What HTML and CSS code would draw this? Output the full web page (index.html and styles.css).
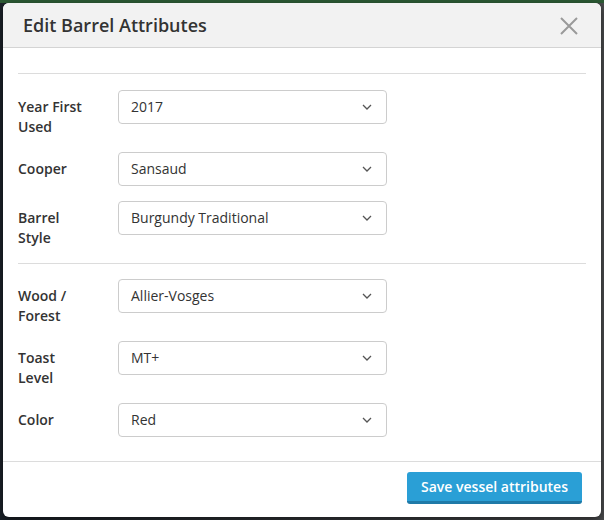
FILE: index.html
```html
<!DOCTYPE html>
<html>
<head>
<meta charset="utf-8">
<link rel="stylesheet" href="styles.css">
</head>
<body>
<div class="backdrop">
  <div class="modal">
    <div class="modal-header">
      <h4 class="modal-title">Edit Barrel Attributes</h4>
      <span class="close" aria-label="Close">
        <svg width="18" height="18" viewBox="0 0 18 18"><path d="M1 1 L17 17 M17 1 L1 17" stroke="#9a9a9a" stroke-width="2" fill="none"/></svg>
      </span>
    </div>
    <div class="modal-body">
      <hr class="sep first">
      <div class="form-group">
        <label class="lbl">Year First Used</label>
        <div class="select"><span>2017</span><svg class="chev" width="10" height="6" viewBox="0 0 10 6"><path d="M1 1 L5 5 L9 1" stroke="#555" stroke-width="1.3" fill="none"/></svg></div>
      </div>
      <div class="form-group">
        <label class="lbl">Cooper</label>
        <div class="select"><span>Sansaud</span><svg class="chev" width="10" height="6" viewBox="0 0 10 6"><path d="M1 1 L5 5 L9 1" stroke="#555" stroke-width="1.3" fill="none"/></svg></div>
      </div>
      <div class="form-group">
        <label class="lbl">Barrel Style</label>
        <div class="select"><span>Burgundy Traditional</span><svg class="chev" width="10" height="6" viewBox="0 0 10 6"><path d="M1 1 L5 5 L9 1" stroke="#555" stroke-width="1.3" fill="none"/></svg></div>
      </div>
      <hr class="sep mid">
      <div class="form-group">
        <label class="lbl">Wood / Forest</label>
        <div class="select"><span>Allier-Vosges</span><svg class="chev" width="10" height="6" viewBox="0 0 10 6"><path d="M1 1 L5 5 L9 1" stroke="#555" stroke-width="1.3" fill="none"/></svg></div>
      </div>
      <div class="form-group">
        <label class="lbl">Toast Level</label>
        <div class="select"><span>MT+</span><svg class="chev" width="10" height="6" viewBox="0 0 10 6"><path d="M1 1 L5 5 L9 1" stroke="#555" stroke-width="1.3" fill="none"/></svg></div>
      </div>
      <div class="form-group last">
        <label class="lbl">Color</label>
        <div class="select"><span>Red</span><svg class="chev" width="10" height="6" viewBox="0 0 10 6"><path d="M1 1 L5 5 L9 1" stroke="#555" stroke-width="1.3" fill="none"/></svg></div>
      </div>
    </div>
    <div class="modal-footer">
      <button class="btn">Save vessel attributes</button>
    </div>
  </div>
</div>
</body>
</html>
```
FILE: styles.css
```css
html, body {
  margin: 0;
  padding: 0;
  height: 100%;
}
body {
  background: linear-gradient(to right, #1b2128 0px, #1b2128 6px, #2d3034 40%, #4a4b4d 100%);
  font-family: "Open Sans", "Liberation Sans", sans-serif;
  color: #333;
}
.backdrop {
  border-top: 3px solid #2c5a34;
  padding: 0 3px 3px 3px;
  height: 517px;
  box-sizing: border-box;
}
.modal {
  background: #fff;
  border-radius: 6px;
  overflow: hidden;
  height: 514px;
  display: flex;
  flex-direction: column;
  box-shadow: 0 3px 9px rgba(0,0,0,0.5);
}
.modal-header {
  background: #f2f2f2;
  border-bottom: 1px solid #d4d4d4;
  height: 45px;
  box-sizing: border-box;
  display: flex;
  align-items: center;
  justify-content: space-between;
  padding: 0 23px 0 20px;
}
.modal-title {
  margin: 0;
  font-size: 18px;
  font-weight: 600;
  color: #333;
  letter-spacing: 0;
}
.close {
  display: flex;
  align-items: center;
  margin-top: 1px;
}
.modal-body {
  padding: 0 15px;
  flex: 1;
}
.sep {
  border: 0;
  border-top: 1px solid #dcdcdc;
  margin: 0;
}
.sep.first {
  margin-top: 25px;
  margin-bottom: 16px;
}
.sep.mid {
  margin-top: 0;
  margin-bottom: 15px;
}
.form-group {
  display: flex;
  align-items: flex-start;
  margin-bottom: 15px;
}
.form-group.last {
  margin-bottom: 0;
}
.lbl {
  width: 100px;
  flex: none;
  font-size: 14px;
  font-weight: 600;
  line-height: 20px;
  padding-top: 7px;
  padding-right: 30px;
  box-sizing: border-box;
}
.select {
  width: 269px;
  height: 34px;
  box-sizing: border-box;
  border: 1px solid #cccccc;
  border-radius: 4px;
  display: flex;
  align-items: center;
  justify-content: space-between;
  padding: 0 14px 0 12px;
  font-size: 14px;
  color: #333;
}
.select span {
  margin-top: -2px;
}
.chev {
  display: block;
}
.modal-footer {
  border-top: 1px solid #dcdcdc;
  height: 56px;
  box-sizing: border-box;
  display: flex;
  justify-content: flex-end;
  align-items: flex-start;
  padding: 10px 19px 0 0;
}
.btn {
  background: #2a9fd6;
  border: 0;
  border-bottom: 3px solid #1f7aa8;
  border-radius: 3px;
  color: #fff;
  font-family: "Open Sans", "Liberation Sans", sans-serif;
  font-size: 14px;
  font-weight: 600;
  height: 32px;
  padding: 0 14px;
  box-sizing: border-box;
}
```
